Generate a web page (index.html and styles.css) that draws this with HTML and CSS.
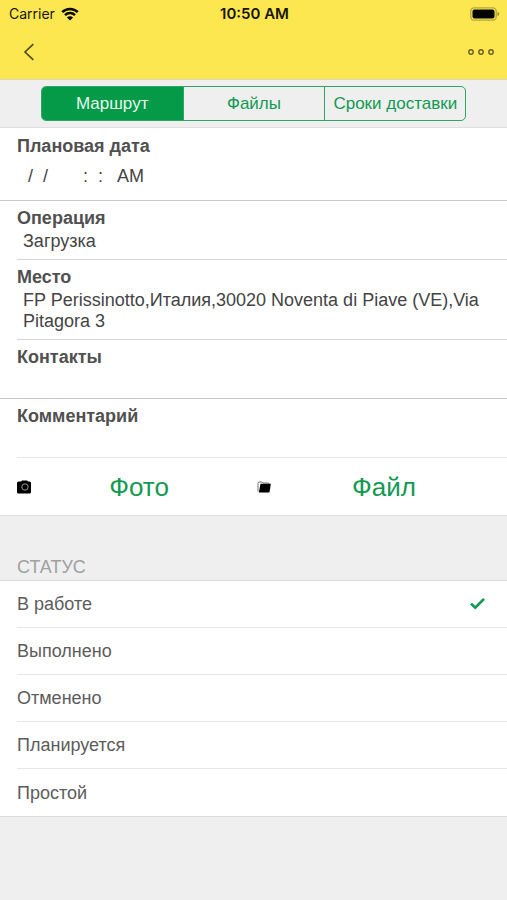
FILE: index.html
```html
<!DOCTYPE html>
<html lang="ru">
<head>
<meta charset="utf-8">
<meta name="viewport" content="width=device-width, initial-scale=1">
<title>Маршрут</title>
<link rel="stylesheet" href="styles.css">
</head>
<body>
<header class="top">
  <div class="status-bar">
    <div class="carrier">Carrier
      <svg class="wifi" viewBox="0 0 18 14" aria-hidden="true">
        <path d="M1.200 5.200a11 11 0 0 1 15.600 0M4 8.100a7 7 0 0 1 10 0" fill="none" stroke="#0b0a03" stroke-width="2.500"/>
        <path d="M5.900 10.500a4.400 4.400 0 0 1 6.200 0L9 13.600z" fill="#0b0a03"/>
      </svg>
    </div>
    <div class="clock">10:50 AM</div>
    <svg class="battery" viewBox="0 0 30 14" aria-hidden="true">
      <rect x=".8" y=".8" width="25.400" height="12.400" rx="3.500" fill="none" stroke="#b5a540" stroke-width="1.300"/>
      <rect x="2.500" y="2.500" width="22" height="9" rx="2" fill="#050500"/>
      <path d="M27.500 5c2.200.6 2.200 3.400 0 4z" fill="#98892f"/>
    </svg>
  </div>
  <nav class="nav-bar">
    <button class="icon-button" type="button" aria-label="Назад">
      <svg width="12" height="18" viewBox="0 0 12 18"><path d="M10.300 1.200 2 9l8.300 7.800" fill="none" stroke="#4d471c" stroke-width="1.600"/></svg>
    </button>
    <button class="icon-button" type="button" aria-label="Ещё">
      <svg width="28" height="8" viewBox="0 0 28 8"><g fill="none" stroke="#685f25" stroke-width="1.400"><circle cx="4" cy="4" r="2.200"/><circle cx="14" cy="4" r="2.200"/><circle cx="24" cy="4" r="2.200"/></g></svg>
    </button>
  </nav>
</header>
<div class="segment-bar">
  <div class="segments">
    <button class="segment active" type="button">Маршрут</button>
    <button class="segment" type="button">Файлы</button>
    <button class="segment" type="button">Сроки доставки</button>
  </div>
</div>
<main>
  <section class="fields">
    <div class="field date full"><h2>Плановая дата</h2><p> /  /       :  :   AM</p></div>
    <div class="field"><h2>Операция</h2><p>Загрузка</p></div>
    <div class="field"><h2>Место</h2><p>FP Perissinotto,Италия,30020 Noventa di Piave (VE),Via Pitagora 3</p></div>
    <div class="field full"><h2>Контакты</h2><p></p></div>
    <div class="field last"><h2>Комментарий</h2><p></p></div>
    <div class="actions">
      <button class="action" type="button">
        <svg width="14" height="14" viewBox="0 0 14 14" aria-hidden="true"><path d="M1.500 1.500H4L5 .5h5l1 1h1.500Q14 1.500 14 3v9q0 1.500-1.500 1.500h-11Q0 13.500 0 12V3q0-1.500 1.500-1.500z" fill="#000"/><circle cx="8" cy="7" r="3.200" fill="none" stroke="#999" stroke-width="1"/></svg>
        <span>Фото</span>
      </button>
      <button class="action" type="button">
        <svg width="14" height="14" viewBox="0 0 14 14" aria-hidden="true"><path d="M1 11.500V3q0-1 1-1h3l1 1h5q1 0 1 1" fill="none" stroke="#777" stroke-width="1"/><path d="M3.500 3.800h10.300l-1.100 7.700q-.2 1-1.200 1H1.800z" fill="#000"/></svg>
        <span>Файл</span>
      </button>
    </div>
  </section>
  <fieldset class="status">
    <legend>СТАТУС</legend>
    <div class="options">
      <label class="option"><span>В работе</span><input type="radio" name="status" checked></label>
      <label class="option"><span>Выполнено</span><input type="radio" name="status"></label>
      <label class="option"><span>Отменено</span><input type="radio" name="status"></label>
      <label class="option"><span>Планируется</span><input type="radio" name="status"></label>
      <label class="option"><span>Простой</span><input type="radio" name="status"></label>
    </div>
  </fieldset>
</main>
</body>
</html>
```
FILE: styles.css
```css
* { box-sizing: border-box; }
body {
  margin: 0;
  min-height: 100vh;
  background: #efefef;
  color: #444;
  font: 18px/20px "Liberation Sans", Arial, sans-serif;
}
button {
  margin: 0;
  padding: 0;
  border: 0;
  background: none;
  font: inherit;
  color: #129a52;
}
h2, p { margin: 0; }
svg { display: block; flex: none; }

.top { background: #fde750; border-bottom: 1px solid #ddd9b8; }
.status-bar {
  display: grid;
  grid-template-columns: 1fr auto 1fr;
  align-items: center;
  height: 28px;
  padding: 0 7px 0 9px;
  color: #17150a;
  font: 14px/20px Inter, sans-serif;
}
.carrier { display: flex; align-items: center; gap: 6px; }
.wifi { width: 18px; height: 14px; }
.clock { font-size: 15px; font-weight: 600; }
.battery { width: 30px; height: 14px; justify-self: end; }
.nav-bar {
  display: flex;
  align-items: center;
  justify-content: space-between;
  height: 51px;
  padding: 0 12px 3px 23px;
}
.icon-button { display: flex; align-items: center; height: 40px; }

.segment-bar {
  display: flex;
  justify-content: center;
  padding: 6px 0;
  border-bottom: 1px solid #dadfdf;
}
.segments {
  display: grid;
  grid-template-columns: repeat(3, 1fr);
  width: 84%;
  height: 35px;
  border: 1px solid #2ba568;
  border-radius: 5px;
  overflow: hidden;
}
.segment { font-size: 17px; }
.segment + .segment { border-left: 1px solid #2ba568; }
.segment.active { background: #049a48; color: #e4f7eb; }

.fields { background: #fff; padding-left: 17px; border-bottom: 1px solid #dfdfdf; }
.field {
  padding: 6px 17px 7px 0;
  border-bottom: 1px solid #d6d6d6;
}
.field.full { margin-left: -17px; padding-left: 17px; border-color: #c8c8c8; }
.field.last { border-color: #e6e6e6; }
.field h2 { font-size: 18px; line-height: 22px; color: #505050; }
.field p { min-height: 23px; padding: 2px 0 0 6px; line-height: 21px; }
.field.date { padding-top: 7px; padding-bottom: 13px; }
.field.date p { padding-top: 9px; white-space: pre; }
.actions { display: grid; grid-template-columns: 240px 1fr; height: 57px; }
.action { display: flex; align-items: center; padding-right: 10px; font-size: 26px; line-height: 32px; }
.action span { flex: 1; text-align: center; }

.status { margin: 0; padding: 0; border: 0; min-width: 0; }
.status legend {
  padding: 41px 17px 3px;
  color: #a0a0a0;
}
.options { background: #fff; padding-left: 17px; border-top: 1px solid #dcdcdc; border-bottom: 1px solid #dcdcdc; }
.option {
  display: flex;
  align-items: center;
  justify-content: space-between;
  height: 47px;
  padding-right: 22px;
  border-bottom: 1px solid #e6e6e6;
  color: #5c5c5c;
}
.option:last-child { border-bottom: 0; }
.option input {
  appearance: none;
  width: 15px;
  height: 12px;
  margin: 0;
  clip-path: polygon(0 55%, 13% 40%, 35% 64%, 87% 0, 100% 14%, 35% 96%);
}
.option input:checked { background: #129a52; }
```
